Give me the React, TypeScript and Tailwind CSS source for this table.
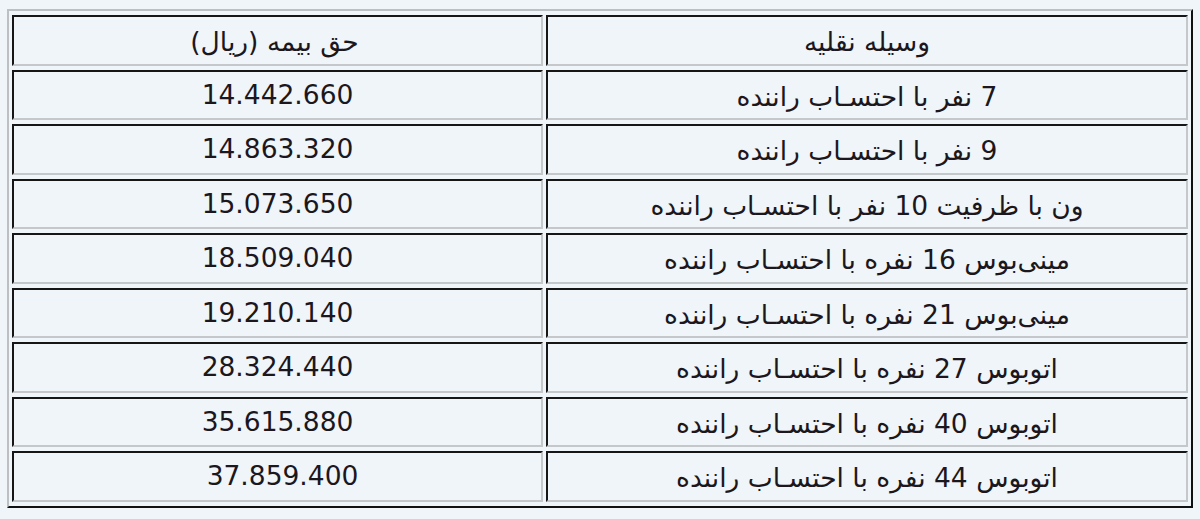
const rows = [
  { name: "7 نفر با احتسـاب راننده", price: "14.442.660" },
  { name: "9 نفر با احتسـاب راننده", price: "14.863.320" },
  { name: "ون با ظرفیت 10 نفر با احتسـاب راننده", price: "15.073.650" },
  { name: "مینی‌بوس 16 نفره با احتسـاب راننده", price: "18.509.040" },
  { name: "مینی‌بوس 21 نفره با احتسـاب راننده", price: "19.210.140" },
  { name: "اتوبوس 27 نفره با احتسـاب راننده", price: "28.324.440" },
  { name: "اتوبوس 40 نفره با احتسـاب راننده", price: "35.615.880" },
  { name: "اتوبوس 44 نفره با احتسـاب راننده", price: "37.859.400", shift: true },
];

const cell =
  "h-[50.5px] p-0 text-center align-middle border-2 border-t-[#161616] border-l-[#161616] border-b-[#c4c8ca] border-r-[#c4c8ca]";

export default function App() {
  return (
    <main className="min-h-screen w-[1200px] h-[519px] bg-[#eff5f8] text-[#1c171d] font-['DejaVu_Sans',sans-serif] pt-[9px] pl-[7px]">
      <table
        dir="rtl"
        className="w-[1186px] border-separate [border-spacing:3px_4px] border-2 border-t-[#bcc0c2] border-l-[#bcc0c2] border-b-[#111] border-r-[#111] text-[26.5px]"
      >
        <tbody>
          <tr>
            <td className={`${cell} w-[642px]`}>
              <span className="inline-block pt-[4px]">وسیله نقلیه</span>
            </td>
            <td className={cell}>
              <span className="inline-block pt-[4px] pr-[6px]">حق بیمه (ریال)</span>
            </td>
          </tr>
          {rows.map((r) => (
            <tr key={r.price}>
              <td className={cell}>
                <span className="inline-block pt-[4px]">{r.name}</span>
              </td>
              <td className={cell}>
                <span className={r.shift ? "inline-block pl-[10px]" : "inline-block"}>{r.price}</span>
              </td>
            </tr>
          ))}
        </tbody>
      </table>
    </main>
  );
}
